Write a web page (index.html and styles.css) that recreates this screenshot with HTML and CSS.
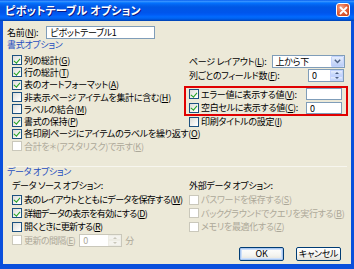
FILE: index.html
```html
<!DOCTYPE html>
<html lang="ja">

<head>
    <meta charset="UTF-8">
    <title>ピボットテーブル オプション</title>
    <link rel="stylesheet" href="styles.css">
</head>

<body>
<div class="window">
    <header class="titleBar">
        <span class="titleText">ピボットテーブル オプション</span>
        <span class="closeButton">
            <svg width="9" height="9" viewBox="0 0 9 9"><path d="M1.5 1.5 L7.5 7.5 M7.5 1.5 L1.5 7.5" stroke="#fff" stroke-width="1.8" stroke-linecap="round"/></svg>
        </span>
    </header>

    <main class="dialogBody">
        <div class="nameRow">
            <span>名前(<u>N</u>):</span>
            <div class="textBox nameBox">ピボットテーブル1</div>
        </div>

        <!-- FORMAT OPTIONS -->
        <div class="groupTitle">書式オプション</div>
        <div class="formatSection">
            <ul class="checkList formatList">
                <li class="checked"><span class="box"></span>列の総計(<u>G</u>)</li>
                <li class="checked"><span class="box"></span>行の総計(<u>T</u>)</li>
                <li class="checked"><span class="box"></span>表のオートフォーマット(<u>A</u>)</li>
                <li><span class="box"></span>非表示ページ アイテムを集計に含む(<u>H</u>)</li>
                <li><span class="box"></span>ラベルの結合(<u>M</u>)</li>
                <li class="checked"><span class="box"></span>書式の保持(<u>P</u>)</li>
                <li class="checked"><span class="box"></span>各印刷ページにアイテムのラベルを繰り返す(<u>O</u>)</li>
                <li class="disabled"><span class="box"></span>合計を＊(アスタリスク)で示す(<u>K</u>)</li>
            </ul>

            <div class="formatRight">
                <div class="fieldRow layoutRow">
                    <span>ページ レイアウト(<u>L</u>):</span>
                    <div class="comboBox">上から下<span class="dropButton">
                        <svg width="7" height="5" viewBox="0 0 7 5"><path d="M0.8 0.8 L3.5 3.6 L6.2 0.8" fill="none" stroke="#4d6185" stroke-width="1.4"/></svg>
                    </span></div>
                </div>
                <div class="fieldRow">
                    <span>列ごとのフィールド数(<u>F</u>):</span>
                    <div class="spinBox">0<span class="spinButtons"><i class="up"></i><i class="down"></i></span></div>
                </div>
                <div class="highlightBox">
                    <div class="fieldRow checkedRow">
                        <span class="checkLabel"><span class="box"></span>エラー値に表示する値(<u>V</u>):</span>
                        <div class="textBox valueBox"></div>
                    </div>
                    <div class="fieldRow checkedRow">
                        <span class="checkLabel"><span class="box"></span>空白セルに表示する値(<u>C</u>):</span>
                        <div class="textBox valueBox">0</div>
                    </div>
                </div>
                <ul class="checkList printList">
                    <li><span class="box"></span>印刷タイトルの設定(<u>I</u>)</li>
                </ul>
            </div>
        </div>

        <!-- DATA OPTIONS -->
        <div class="groupTitle dataTitle">データ オプション</div>
        <div class="dataSection">
            <div class="dataColumn">
                <div class="subTitle">データ ソース オプション:</div>
                <ul class="checkList dataList sourceList">
                    <li class="checked"><span class="box"></span>表のレイアウトとともにデータを保存する(<u>W</u>)</li>
                    <li class="checked"><span class="box"></span>詳細データの表示を有効にする(<u>D</u>)</li>
                    <li><span class="box"></span>開くときに更新する(<u>R</u>)</li>
                    <li class="disabled"><span class="box"></span>更新の間隔(<u>E</u>)
                        <div class="spinBox disabledSpin">0<span class="spinButtons"><i class="up"></i><i class="down"></i></span></div>
                        <span class="unit">分</span>
                    </li>
                </ul>
            </div>
            <div class="dataColumn externalColumn">
                <div class="subTitle">外部データ オプション:</div>
                <ul class="checkList dataList">
                    <li class="disabled"><span class="box"></span>パスワードを保存する(<u>S</u>)</li>
                    <li class="disabled"><span class="box"></span>バックグラウンドでクエリを実行する(<u>B</u>)</li>
                    <li class="disabled"><span class="box"></span>メモリを最適化する(<u>Z</u>)</li>
                </ul>
            </div>
        </div>

        <footer class="buttonRow">
            <button class="xpButton defaultButton">OK</button>
            <button class="xpButton">キャンセル</button>
        </footer>
    </main>
</div>
</body>

</html>
```

FILE: styles.css
```css
* {
    box-sizing: border-box;
    margin: 0;
    padding: 0;
}

body {
    width: 354px;
    height: 269px;
    overflow: hidden;
    background: #ece9d8;
    font-family: "Noto Sans CJK JP", "Noto Sans", sans-serif;
    font-feature-settings: "palt" 1;
    font-size: 9px;
    letter-spacing: -0.3px;
    color: #000;
}

u {
    text-decoration: underline;
    text-underline-offset: 1px;
}

ul {
    list-style: none;
}

.window {
    width: 354px;
    height: 269px;
    display: flex;
    flex-direction: column;
}

/* TITLE BAR */
.titleBar {
    height: 21px;
    display: flex;
    align-items: center;
    justify-content: space-between;
    padding: 0 4px 1px 5px;
    background: linear-gradient(to bottom,
        #0058ee 0%, #3d95ff 6%, #1a84ff 10%, #036ffc 16%, #0262ee 24%,
        #0057e5 34%, #0055eb 60%, #005bf5 70%, #026afe 80%, #0062ef 88%,
        #0052d6 94%, #0040ab 100%);
    color: #fff;
}

.titleText {
    font-size: 11px;
    font-weight: bold;
    letter-spacing: 0.2px;
    text-shadow: 1px 1px 0 #0a1883;
}

.closeButton {
    width: 14px;
    height: 14px;
    display: flex;
    align-items: center;
    justify-content: center;
    border: 1px solid #fff;
    border-radius: 3px;
    background: radial-gradient(circle at 35% 30%, #f6a58a 0%, #e5633c 45%, #c3380f 100%);
}

/* DIALOG BODY */
.dialogBody {
    flex: 1;
    border-left: 3px solid #0a4fdc;
    border-right: 3px solid #0a4fdc;
    border-bottom: 5px solid #0a4fdc;
    padding: 5px 0 0 4px;
    display: flex;
    flex-direction: column;
}

.nameRow {
    height: 13px;
    display: flex;
    align-items: center;
}

.textBox {
    background: #fff;
    border: 1px solid #7f9db9;
    height: 13px;
    line-height: 11px;
    padding: 0 3px;
}

.nameBox {
    width: 109px;
    margin-left: 8px;
}

.groupTitle {
    height: 12px;
    line-height: 12px;
    color: #1f4fbf;
}

/* CHECKBOXES */
.checkList li,
.checkLabel {
    display: flex;
    align-items: center;
    white-space: nowrap;
    line-height: 11px;
}

.box {
    width: 10px;
    height: 10px;
    flex: none;
    margin-right: 2px;
    border: 1px solid #1c5180;
    background: linear-gradient(135deg, #dcdcd7 0%, #fff 90%);
    position: relative;
}

.checked .box::after,
.checkedRow .box::after {
    content: "";
    position: absolute;
    left: 2px;
    top: 0.5px;
    width: 2.5px;
    height: 5px;
    border-right: 1.6px solid #21a121;
    border-bottom: 1.6px solid #21a121;
    transform: rotate(40deg);
}

.disabled {
    color: #aca899;
}

.disabled .box {
    border-color: #cac8bb;
    background: #fff;
}

/* FORMAT SECTION */
.formatSection {
    display: flex;
    height: 114px;
}

.formatList {
    width: 172px;
    margin-left: 5px;
    padding-top: 3px;
}

.formatList li {
    height: 12.3px;
}

.formatRight {
    width: 164px;
    padding-top: 4px;
}

.fieldRow {
    height: 13px;
    display: flex;
    align-items: center;
    justify-content: space-between;
    padding: 0 4px 0 5px;
    white-space: nowrap;
}

.layoutRow {
    justify-content: flex-end;
    gap: 5px;
    margin-bottom: 1px;
    padding-right: 3px;
}

.comboBox {
    width: 76px;
    height: 13px;
    background: #fff;
    border: 1px solid #7f9db9;
    padding-left: 3px;
    line-height: 11px;
    display: flex;
    justify-content: space-between;
}

.dropButton {
    width: 13px;
    height: 11px;
    display: flex;
    align-items: center;
    justify-content: center;
    background: linear-gradient(to bottom, #e6eefc, #b9cdf7);
    border: 1px solid #c3d3fd;
    border-radius: 1px;
}

.spinBox {
    width: 36px;
    height: 13px;
    background: #fff;
    border: 1px solid #7f9db9;
    padding-left: 3px;
    line-height: 11px;
    display: flex;
    justify-content: space-between;
}

.spinButtons {
    width: 13px;
    display: flex;
    flex-direction: column;
}

.spinButtons i {
    flex: 1;
    display: flex;
    align-items: center;
    justify-content: center;
    background: linear-gradient(to bottom, #e6eefc, #c1d3fb);
    border: 1px solid #c3d3fd;
}

.spinButtons i::after {
    content: "";
    border-left: 2.5px solid transparent;
    border-right: 2.5px solid transparent;
}

.spinButtons .up::after {
    border-bottom: 2.5px solid #4d6185;
}

.spinButtons .down::after {
    border-top: 2.5px solid #4d6185;
}

.highlightBox {
    margin-top: 4px;
    height: 30px;
    border: 2px solid #e00000;
    display: flex;
    flex-direction: column;
    gap: 1px;
}

.highlightBox .fieldRow {
    padding: 0 4px 0 3px;
}

.valueBox {
    width: 36px;
    height: 12px;
}

.printList {
    margin-left: 5px;
}

.printList li {
    height: 11px;
}

/* DATA SECTION */
.dataTitle {
    margin-top: 1px;
    margin-right: 4px;
    background: linear-gradient(to bottom, #f7f6ef 0, #f7f6ef 1px, transparent 1px);
}

.dataSection {
    display: flex;
    height: 69px;
}

.dataColumn {
    width: 177px;
    padding: 2px 0 0 5px;
}

.externalColumn {
    width: 160px;
}

.subTitle {
    height: 12px;
    line-height: 12px;
    margin-bottom: 1px;
}

.dataList li {
    height: 13.5px;
}

.sourceList li {
    letter-spacing: -0.6px;
}

.disabledSpin {
    width: 43px;
    margin-left: 4px;
    border-color: #c9c7ba;
}

.disabledSpin .spinButtons i {
    background: #f4f3ee;
    border-color: #eeede5;
}

.disabledSpin .spinButtons .up::after {
    border-bottom-color: #c9c7ba;
}

.disabledSpin .spinButtons .down::after {
    border-top-color: #c9c7ba;
}

.unit {
    margin-left: 3px;
}

/* BUTTONS */
.buttonRow {
    display: flex;
    justify-content: flex-end;
    gap: 12px;
    padding-right: 10px;
}

.xpButton {
    width: 45px;
    height: 14px;
    font-family: inherit;
    font-size: 9px;
    font-feature-settings: "palt" 1;
    letter-spacing: -0.3px;
    line-height: 12px;
    color: #000;
    border: 1px solid #003c74;
    border-radius: 2px;
    background: linear-gradient(to bottom, #fff 0%, #f4f4f0 60%, #e3e2da 100%);
}

.defaultButton {
    box-shadow: inset 0 0 0 1px #a8c6f0, inset 0 0 0 2px #cee0fa;
}
```
